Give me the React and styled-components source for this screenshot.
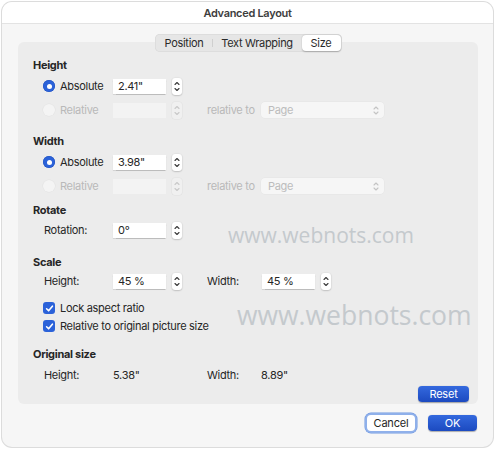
import React from 'react'
import styled, { createGlobalStyle } from 'styled-components'

const Global = createGlobalStyle`
  html, body { margin: 0; padding: 0; background: #ffffff; }
  body { font-family: Inter, "Liberation Sans", sans-serif; font-size: 11px; letter-spacing: -0.3px; color: #262626; }
  * { box-sizing: border-box; }
`

const Page = styled.div`
  padding: 2px 4px 0 2px;
  width: 497px;
  height: 450px;
`

const Window = styled.div`
  width: 491px;
  height: 445px;
  border-radius: 10px;
  background: #f6f6f6;
  box-shadow: 0 0 0 1px #dcdcdc;
  overflow: hidden;
  display: flex;
  flex-direction: column;
`

const TitleBar = styled.div`
  height: 22px;
  background: #ffffff;
  border-bottom: 1px solid #e3e3e3;
  display: flex;
  align-items: center;
  justify-content: center;
  font-weight: 600;
  font-size: 11px;
  color: #3d3d3d;
  padding-top: 1px;
`

const TabBar = styled.div`
  position: relative;
  z-index: 1;
  align-self: center;
  margin: 10px 0 0 1px;
  height: 18px;
  display: flex;
  align-items: center;
  padding: 1px;
  border-radius: 5px;
  background: #e6e6e6;
  box-shadow: inset 0 0 0 0.5px #d4d4d4;
`

const Tab = styled.div`
  height: 16px;
  width: ${p => p.$w}px;
  display: flex;
  align-items: center;
  justify-content: center;
  border-radius: 4px;
  font-size: 11px;
  color: #2a2a2a;
  background: ${p => (p.$active ? '#ffffff' : 'transparent')};
  box-shadow: ${p => (p.$active ? '0 0.5px 1.5px rgba(0,0,0,0.25)' : 'none')};
  position: relative;
  &::after {
    content: '';
    display: ${p => (p.$sep ? 'block' : 'none')};
    position: absolute;
    right: 0;
    top: 4px;
    height: 8px;
    width: 1px;
    background: #cfcfcf;
  }
`

const Panel = styled.div`
  position: relative;
  margin: -10px 15px 0 16px;
  height: 362px;
  border-radius: 6px;
  background: #ececec;
  padding: 16px 9px 2px 15px;
  display: flex;
  flex-direction: column;
`

const Heading = styled.div`
  height: 14px;
  line-height: 14px;
  font-weight: 700;
  font-size: 11px;
  color: #262626;
  margin-top: ${p => p.$mt || 0}px;
`

const Row = styled.div`
  height: ${p => p.$h || 20}px;
  margin-top: ${p => p.$mt || 0}px;
  padding-left: 10px;
  display: flex;
  align-items: center;
`

const LabelCell = styled.div`
  width: ${p => p.$w}px;
  flex-shrink: 0;
  display: flex;
  align-items: center;
  gap: 5px;
  padding-left: ${p => p.$pl || 0}px;
  color: ${p => (p.$disabled ? '#b9b9b9' : '#262626')};
`

const Radio = styled.span`
  width: 12px;
  height: 12px;
  border-radius: 50%;
  flex-shrink: 0;
  background: ${p => (p.$on ? '#2b62d9' : '#f4f4f4')};
  box-shadow: ${p => (p.$on ? 'inset 0 0 0 0.5px #1d4fbf' : '0 0 0 0.5px #e2e2e2')};
  display: flex;
  align-items: center;
  justify-content: center;
  &::after {
    content: '';
    display: ${p => (p.$on ? 'block' : 'none')};
    width: 5px;
    height: 5px;
    border-radius: 50%;
    background: #ffffff;
  }
`

const Field = styled.div`
  width: ${p => p.$w || 53}px;
  height: 15px;
  flex-shrink: 0;
  background: ${p => (p.$disabled ? '#f3f3f3' : '#ffffff')};
  box-shadow: ${p => (p.$disabled ? 'none' : '0 0.5px 1px rgba(0,0,0,0.2)')};
  padding-left: 5px;
  display: flex;
  align-items: center;
  font-size: 11px;
  color: #262626;
`

const StepBox = styled.div`
  width: 10px;
  height: 17px;
  margin-left: 6px;
  margin-right: ${p => p.$mr || 0}px;
  flex-shrink: 0;
  border-radius: 3px;
  background: ${p => (p.$disabled ? '#f0f0f0' : '#ffffff')};
  box-shadow: ${p => (p.$disabled ? '0 0 0 0.5px #e0e0e0' : '0 0.5px 1.5px rgba(0,0,0,0.3)')};
  display: flex;
  align-items: center;
  justify-content: center;
`

const Select = styled.div`
  width: 123px;
  height: 16px;
  border-radius: 4px;
  background: #f6f6f6;
  box-shadow: 0 0 0 0.5px #e4e4e4;
  display: flex;
  align-items: center;
  justify-content: space-between;
  padding: 0 5px 0 7px;
  color: #bcbcbc;
`

const Value = styled.div`
  width: ${p => p.$w}px;
  flex-shrink: 0;
  color: #262626;
`

const CheckRow = styled.div`
  height: 16px;
  margin-top: ${p => p.$mt || 0}px;
  padding-left: 10px;
  display: flex;
  align-items: center;
  gap: 5px;
  color: #262626;
`

const Check = styled.span`
  width: 12px;
  height: 12px;
  border-radius: 3px;
  background: #2b62d9;
  display: flex;
  align-items: center;
  justify-content: center;
`

const ResetRow = styled.div`
  display: flex;
  justify-content: flex-end;
  margin-top: 1px;
`

const Button = styled.button`
  font-family: inherit;
  font-size: 11px;
  letter-spacing: -0.2px;
  border: none;
  border-radius: 4px;
  width: ${p => p.$w}px;
  height: 16px;
  padding: 0;
  color: ${p => (p.$primary ? '#ffffff' : '#262626')};
  background: ${p => (p.$primary ? 'linear-gradient(#3469de, #1c4ac0)' : '#ffffff')};
  box-shadow: ${p => (p.$focus ? '0 0 0 2px #8fb0ea, 0 0 0 2.5px #6f97e0' : '0 0.5px 1px rgba(0,0,0,0.3)')};
`

const Footer = styled.div`
  display: flex;
  justify-content: flex-end;
  align-items: center;
  gap: 13px;
  padding: 11px 16px 0 0;
`

const Watermark = styled.div`
  position: absolute;
  left: ${p => p.$x}px;
  top: ${p => p.$y}px;
  font-family: "Open Sans", "Noto Sans", sans-serif;
  font-size: ${p => p.$size}px;
  letter-spacing: 0;
  color: #c4c9cd;
  white-space: nowrap;
  pointer-events: none;
`

function Stepper({ disabled, mr }) {
  const c = disabled ? '#c8c8c8' : '#3a3a3a'
  return (
    <StepBox $disabled={disabled} $mr={mr}>
      <svg width="6" height="13" viewBox="0 0 6 13">
        <path d="M1 4.5 L3 2.5 L5 4.5" fill="none" stroke={c} strokeWidth="1.1" strokeLinecap="round" strokeLinejoin="round" />
        <path d="M1 8.5 L3 10.5 L5 8.5" fill="none" stroke={c} strokeWidth="1.1" strokeLinecap="round" strokeLinejoin="round" />
      </svg>
    </StepBox>
  )
}

function Chevrons() {
  return (
    <svg width="6" height="11" viewBox="0 0 6 11">
      <path d="M1 4 L3 2 L5 4" fill="none" stroke="#c4c4c4" strokeWidth="1.1" strokeLinecap="round" strokeLinejoin="round" />
      <path d="M1 7 L3 9 L5 7" fill="none" stroke="#c4c4c4" strokeWidth="1.1" strokeLinecap="round" strokeLinejoin="round" />
    </svg>
  )
}

function Tick() {
  return (
    <svg width="9" height="9" viewBox="0 0 9 9">
      <path d="M1.6 4.8 L3.6 6.8 L7.4 2.2" fill="none" stroke="#ffffff" strokeWidth="1.6" strokeLinecap="round" strokeLinejoin="round" />
    </svg>
  )
}

function SizeGroup({ title, value, mt }) {
  return (
    <>
      <Heading $mt={mt}>{title}</Heading>
      <Row $mt={4}>
        <LabelCell $w={70}>
          <Radio $on />
          Absolute
        </LabelCell>
        <Field>{value}</Field>
        <Stepper mr={25} />
      </Row>
      <Row $mt={4}>
        <LabelCell $w={70} $disabled>
          <Radio />
          Relative
        </LabelCell>
        <Field $disabled />
        <Stepper disabled mr={25} />
        <LabelCell $w={54} $disabled>relative to</LabelCell>
        <Select>
          Page
          <Chevrons />
        </Select>
      </Row>
    </>
  )
}

export default function App() {
  return (
    <Page>
      <Global />
      <Window>
        <TitleBar>Advanced Layout</TitleBar>
        <TabBar>
          <Tab $w={57} $sep>Position</Tab>
          <Tab $w={89}>Text Wrapping</Tab>
          <Tab $w={39} $active>Size</Tab>
        </TabBar>
        <Panel>
          <SizeGroup title="Height" value={'2.41"'} />
          <SizeGroup title="Width" value={'3.98"'} mt={14} />

          <Heading $mt={7}>Rotate</Heading>
          <Row $mt={3}>
            <LabelCell $w={70} $pl={1}>Rotation:</LabelCell>
            <Field>0°</Field>
            <Stepper />
          </Row>

          <Heading $mt={15}>Scale</Heading>
          <Row $mt={2}>
            <LabelCell $w={70} $pl={1}>Height:</LabelCell>
            <Field>45 %</Field>
            <Stepper mr={25} />
            <LabelCell $w={55}>Width:</LabelCell>
            <Field>45 %</Field>
            <Stepper />
          </Row>
          <CheckRow $mt={9}>
            <Check><Tick /></Check>
            Lock aspect ratio
          </CheckRow>
          <CheckRow $mt={2}>
            <Check><Tick /></Check>
            Relative to original picture size
          </CheckRow>

          <Heading $mt={13}>Original size</Heading>
          <Row $mt={4}>
            <LabelCell $w={70} $pl={1}>Height:</LabelCell>
            <Value $w={94}>5.38"</Value>
            <LabelCell $w={54}>Width:</LabelCell>
            <Value $w={60}>8.89"</Value>
          </Row>
          <ResetRow>
            <Button $primary $w={51}>Reset</Button>
          </ResetRow>

          <Watermark $x={210} $y={179} $size={21}>www.webnots.com</Watermark>
          <Watermark $x={219} $y={255} $size={26.5}>www.webnots.com</Watermark>
        </Panel>
        <Footer>
          <Button $focus $w={48}>Cancel</Button>
          <Button $primary $w={49}>OK</Button>
        </Footer>
      </Window>
    </Page>
  )
}
